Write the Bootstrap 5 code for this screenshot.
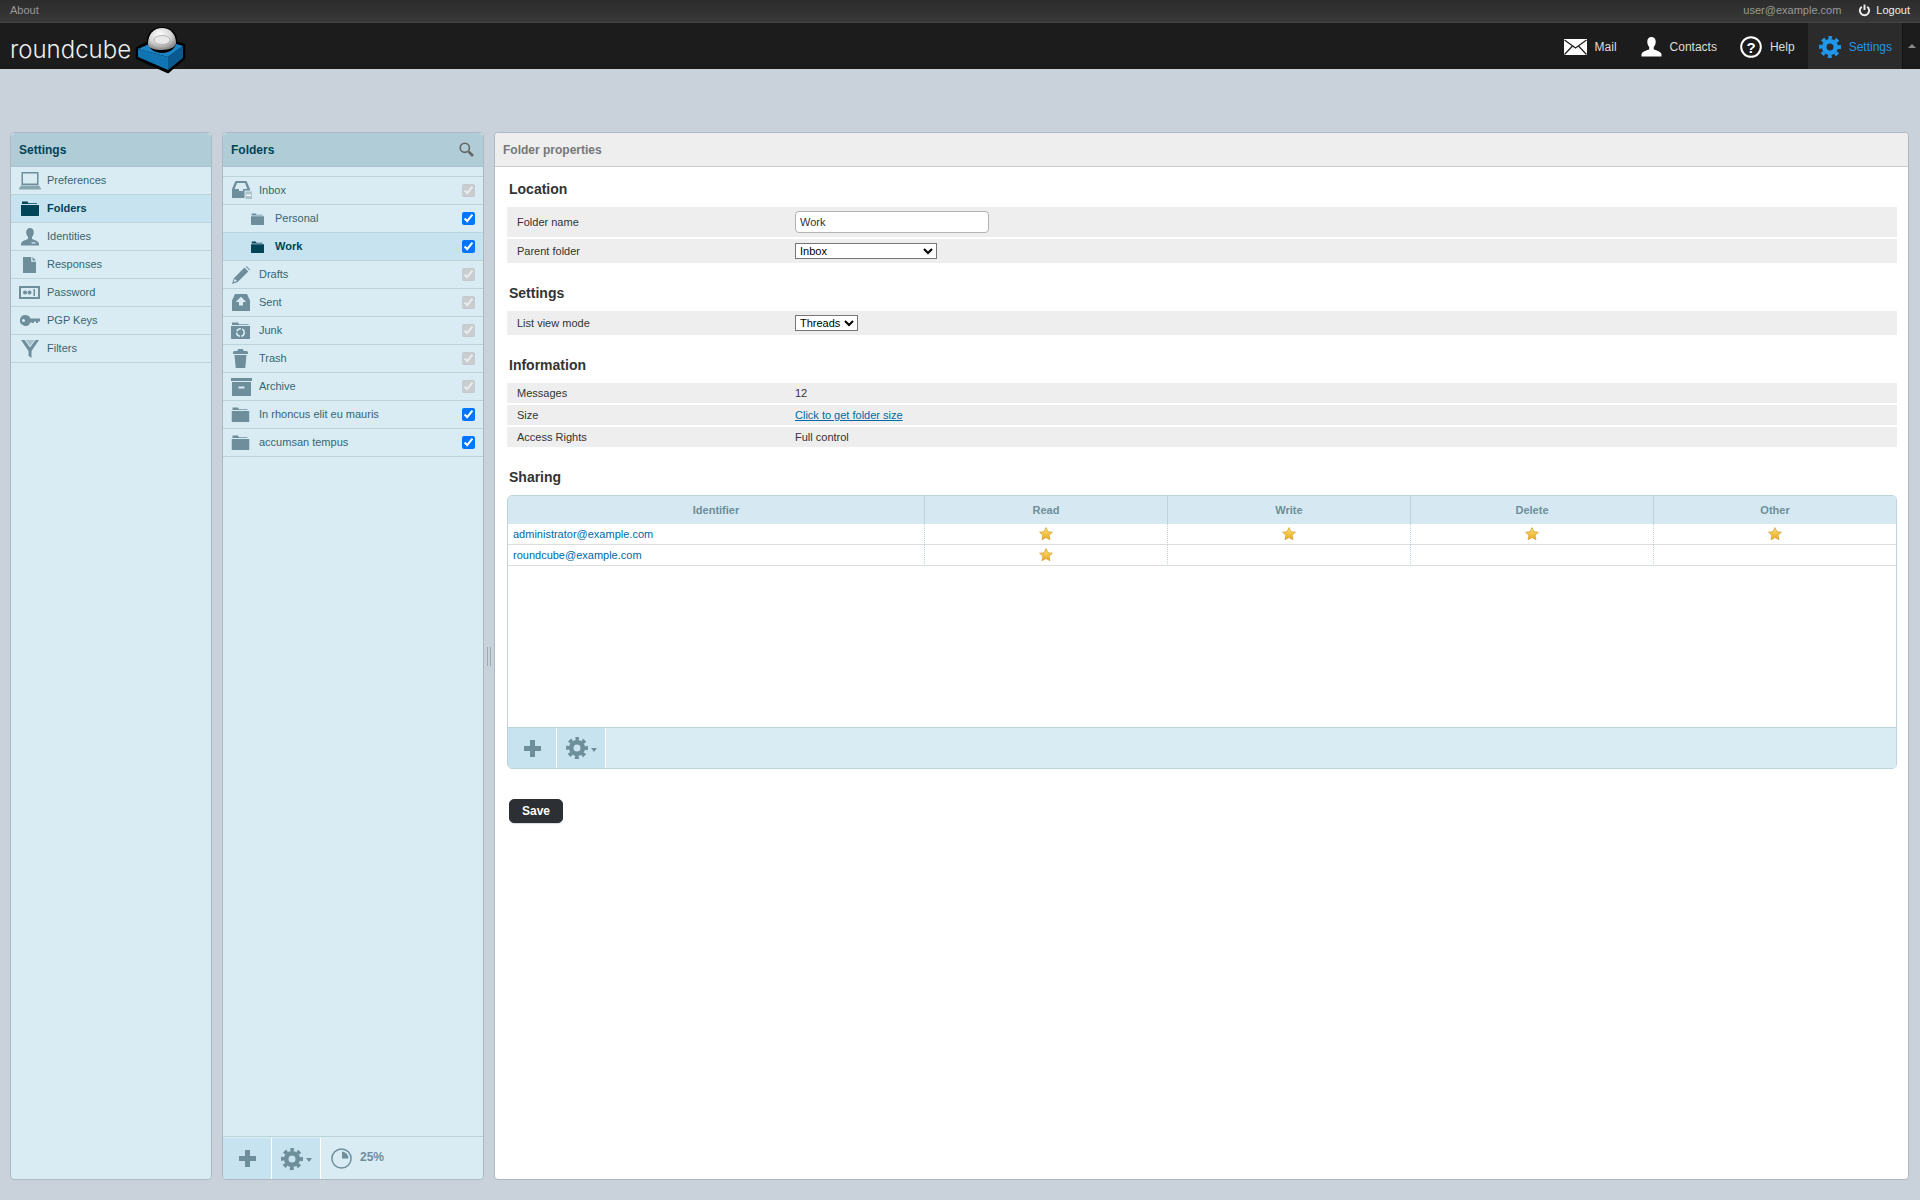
<!DOCTYPE html>
<html lang="en">
<head>
<meta charset="UTF-8">
<title>Roundcube Webmail :: Folders</title>
<link rel="stylesheet" href="https://cdn.jsdelivr.net/npm/bootstrap@5.3.0/dist/css/bootstrap.min.css">
<style>
html, body { height: 100%; }
body { background: #c9d1da; font-family: "Liberation Sans", Arial, sans-serif; font-size: 11px; color: #333; overflow: hidden; }

/* top lines */
.topline { height: 23px; background: linear-gradient(#2c2c2c, #383838); border-bottom: 1px solid #444; padding: 0 10px 2px; color: #999; }
.topline a { color: #999; text-decoration: none; }
.topline .logout-link { color: #eee; margin-left: 17px; gap: 5px; }
.header-bar { height: 46px; background: #1c1c1c; padding: 0; flex-wrap: nowrap; align-items: flex-start; }
.logo-text { font-family: Inter, "Liberation Sans", sans-serif; font-weight: 300; font-size: 24px; line-height: 46px; margin-top: 4px; height: 42px; color: #eee; margin-left: 10px; width: 125px; }
.logo-cube { width: 52px; height: 50px; margin-top: 2px; flex: none; }
.tab-link { height: 46px; padding: 1px 10px 0; color: #ddd; font-size: 12px; gap: 8px; margin-left: 3px; }
.tab-link:hover { color: #fff; }
.tab-contacts { margin-left: 4px; }
.tab-link.tab-on { background: #2b2b2b; color: #1f97ea; padding-left: 11px; }
.tab-toggle { width: 18px; height: 46px; border-left: 1px solid #111; }
.tri-up { width: 0; height: 0; border: 4px solid transparent; border-top: 0; border-bottom: 4px solid #888; }

/* panels */
.workspace { height: 1048px; margin: 63px 11px 0 10px; }
.side-panel { background: #d9ecf4; border: 1px solid #aeb8c3; border-radius: 4px; overflow: hidden; --bs-card-bg: #d9ecf4; }
.panel-settings { width: 202px; }
.panel-folders { width: 262px; margin-left: 10px; }
.panel-head { height: 34px; padding: 0 9px 0 8px; background: #b0ccd7; color: #004458; font-size: 12px; font-weight: 700; border: 0; border-bottom: 1px solid #a9c5d0; border-radius: 0; }
.splitter { width: 10px; }
.splitter span { display: block; width: 1px; height: 19px; background: #a0a8b0; margin: 0 1px; }
.list-group-flush > .sb-row, .list-group-flush > .sb-row:last-child { height: 28px; padding: 0; background: transparent; border: 0; border-bottom: 1px solid #bbd3da; border-radius: 0; color: #376572; font-size: 11px; }
.list-group-flush > .sb-row.sel { background: #c7e3ef; color: #004458; font-weight: 700; }
.sb-row.sel .ico-cell { color: #004458; }
.ico-cell { width: 36px; flex: none; color: #6d8e9a; padding-left: 1px; }
.fold-ico { width: 36px; flex: none; color: #6d8e9a; padding-left: 8px; }
.fold-sub .fold-ico { width: 52px; padding-left: 28px; }
.fold-sub.sel .fold-ico { color: #004458; }
.shift-1 { margin-left: 1px; }
.shift-2 { margin-left: 2px; }
.sb-row input { margin: 0 8px 0 auto; width: 13px; height: 13px; }
.gap-row { height: 10px; border-bottom: 1px solid #bbd3da; }
.folder-list { flex: 1 1 auto; }
.panel-foot { height: 43px; border-top: 1px solid #bbd3da; color: #6d8e9a; }
.foot-btn { width: 49px; padding: 0; margin-top: 1px; background: #c7e3ef; border: 0; border-right: 1px solid #fff; border-radius: 0; color: #6d8e9a; gap: 3px; }
.foot-btn:hover { background: #c7e3ef; color: #6d8e9a; }
.tri-down { width: 0; height: 0; border: 3.5px solid transparent; border-bottom: 0; border-top: 4px solid #6d8e9a; margin-top: 3px; }
.quota-box { gap: 8px; margin-left: 10px; font-size: 12px; font-weight: 700; }
.quota-box span { margin-top: -2px; }

/* right frame */
.prop-panel { flex: 1 1 0; background: #fff; border: 1px solid #aeb8c3; border-radius: 4px; overflow: hidden; }
.prop-head { height: 34px; padding: 0 8px; background: #eee; color: #777; font-size: 12px; font-weight: 700; border: 0; border-bottom: 1px solid #c9ced3; border-radius: 0; }
.prop-body { padding: 14px 11px 0 12px; }
.sec-title { font-size: 14px; font-weight: 700; line-height: 17px; color: #333; margin: 0 0 9px 2px; }
.sec-block { margin-bottom: 22px; gap: 2px; }
.prop-row { background: #eee; padding-left: 10px; color: #333; }
.h-30 { height: 30px; }
.h-24 { height: 24px; }
.h-20 { height: 20px; }
.prop-label { width: 278px; flex: none; }
.prop-row a { color: #0069a6; }
.prop-row input[type=text] { width: 194px; height: 22px; border: 1px solid #b2b2b2; border-radius: 4px; padding: 0 4px; font-size: 11px; color: #333; background: #fff; line-height: normal; }
.prop-row select { font-size: 11px; line-height: normal; height: 16px; padding: 0; color: #000; background-color: #fff; }
.sel-wide { width: 142px; }
.sel-short { width: 63px; }

/* sharing table */
.share-box { height: 274px; border: 1px solid #bbd3da; border-radius: 5px; overflow: hidden; margin-bottom: 30px; }
.share-scroll { flex: 1 1 auto; }
.share-table { table-layout: fixed; margin: 0; font-size: 11px; border-collapse: separate; border-spacing: 0; }
.share-table th { height: 28px; padding: 0; background: #d6e9f2; color: #6d8e9a; font-weight: 700; text-align: center; vertical-align: middle; border: 0; border-left: 1px solid #bbd3da; }
.share-table th:first-child { border-left: 0; width: 416px; }
.share-table td { height: 21px; padding: 0 4px; vertical-align: middle; text-align: center; border: 0; border-bottom: 1px solid #ddd; border-left: 1px dotted #bbd3da; box-shadow: none; line-height: 1; }
.share-table td:first-child { border-left: 0; padding-left: 5px; text-align: left; color: #0069a6; }
.share-table td svg { display: block; margin: 0 auto; }
.share-foot { height: 41px; flex: none; background: #d9ecf4; border-top: 1px solid #bbd3da; }
.share-foot .foot-btn { margin-top: 0; }
.btn-save { width: 54px; height: 24px; padding: 0; margin-left: 2px; background: #2c3035; border: 1px solid #2c3035; border-radius: 5px; color: #fff; font-size: 12px; font-weight: 700; box-shadow: 0 1px 1px rgba(0,0,0,.15); }
.btn-save:hover { background: #2c3035; color: #fff; }
</style>
</head>
<body>

<!-- icon sprite -->
<svg class="position-absolute" width="0" height="0">
  <defs>
    <linearGradient id="starfill" x1="0" y1="0" x2="0" y2="1"><stop offset="0" stop-color="#fbe27a"/><stop offset="1" stop-color="#eba81c"/></linearGradient>
  </defs>
  <symbol id="i-laptop" viewBox="0 0 22 18"><path fill-rule="evenodd" d="M2.500 0h17v13h-17zM4 1.500v10h14v-10z"/><path opacity=".75" d="M2 13.500h18l2 3v1H0v-1z"/></symbol>
  <symbol id="i-folder" viewBox="0 0 18 15"><path d="M1 2.200V.6h5.500l1 1.600H16v.8H1zM0 4h18v10.500l-.5.5H.5L0 14.500z"/></symbol>
  <symbol id="i-person" viewBox="0 0 18 18"><path fill-rule="evenodd" d="M9 0c2.300 0 3.800 1.700 3.800 4.200 0 2-.8 3.600-1.800 4.800v2c1.800 1 6 1.500 7 4.500v2H0v-2c1-3 5.200-3.500 7-4.500V9C6 7.800 5.200 6.200 5.200 4.200 5.200 1.700 6.700 0 9 0zM10.500 14.200v1.300h4v-1.300z"/></symbol>
  <symbol id="i-doc" viewBox="0 0 13 16"><path d="M0 0h8.200v4.800H13V16H0zM9.500 0L13 3.500H9.500z"/></symbol>
  <symbol id="i-pass" viewBox="0 0 21 13"><path fill-rule="evenodd" d="M0 0h21v13H0zM2 2v9h17V2z"/><circle cx="6" cy="6.500" r="2"/><circle cx="10.500" cy="6.500" r="2"/><path d="M14.500 3H16v7h-1.500z"/></symbol>
  <symbol id="i-key" viewBox="0 0 20 11"><path fill-rule="evenodd" d="M5.500 0a5.500 5.500 0 0 1 5 3.500H20v3h-2v1.500h-2V6.500h-2V8h-2V7.500h-1.500A5.500 5.500 0 1 1 5.500 0zM3.500 4a1.500 1.500 0 1 0 0 3 1.500 1.500 0 0 0 0-3z"/></symbol>
  <symbol id="i-filter" viewBox="0 0 18 18"><path d="M0 0h3.500L9 7.500 14.500 0H18l-7.500 11v7l-3-2.200V11z"/><path opacity=".45" d="M4.500 0h9L9 6z"/></symbol>
  <symbol id="i-inbox" viewBox="0 0 21 19"><path fill-rule="evenodd" d="M3.500 0h11L18 8v9H0V8zM5 2L2.700 8H7v2h4V8h4.300L13 2z"/><rect x="13" y="10" width="7.500" height="8.500" fill="#a9c2cc" stroke="#d9ecf4"/><path d="M14.500 13.500h4.500v1.500h-4.500z" fill="#fff"/></symbol>
  <symbol id="i-pencil" viewBox="0 0 18 18"><path d="M0 18l1.800-5.800L12.500 1.600 16.300 5.400 5.700 16zM2.600 12.700l-.9 3.400 3.400-1z"/><path d="M13.700.7l.7-.7 3.600 3.600-.7.7z"/></symbol>
  <symbol id="i-sent" viewBox="0 0 18 17"><path fill-rule="evenodd" d="M3 0h12l3 6.500V17H0V6.500zM9 2.800L3.800 8H7v3.500h4V8h3.200z"/></symbol>
  <symbol id="i-junk" viewBox="0 0 19 17"><path d="M1 2.200V.5h6l1 1.700h9.500V3H1zM0 4h19v12.500l-.5.500H.5L0 16.500z"/><g fill="none" stroke="#d9ecf4" stroke-width="1.600"><circle cx="9.500" cy="10.500" r="3.800" stroke-dasharray="5 1.400"/></g></symbol>
  <symbol id="i-trash" viewBox="0 0 15 19"><path d="M4.500 1.200Q4.500 0 6 0h3q1.500 0 1.500 1.200V2h3.200Q15 2 15 3.500V5H0V3.500Q0 2 1.300 2h3.200zM1.500 6h12L12.300 19H2.700z"/></symbol>
  <symbol id="i-archive" viewBox="0 0 21 18"><path fill-rule="evenodd" d="M0 0h21v3H0zM1 4h19v14H1zM7.500 8.500v2h6v-2z"/></symbol>
  <symbol id="i-gear" viewBox="-11 -11 22 22"><circle r="5.800" fill="none" stroke="currentColor" stroke-width="4.600"/><circle r="9.300" fill="none" stroke="currentColor" stroke-width="3.400" stroke-dasharray="3.900 3.404" stroke-dashoffset="1.950" transform="rotate(-90)"/></symbol>
  <symbol id="i-star" viewBox="0 0 14 14"><path d="M7 .6l1.900 4.100 4.500.5-3.300 3 .9 4.500L7 10.500l-4 2.200.9-4.500-3.300-3 4.500-.5z" fill="url(#starfill)" stroke="#d39b2b" stroke-width=".7" stroke-linejoin="round"/></symbol>
</svg>

<div class="topline d-flex align-items-center">
  <a href="#">About</a>
  <span class="ms-auto">user@example.com</span>
  <a href="#" class="logout-link d-flex align-items-center">
    <svg width="13" height="13" viewBox="0 0 12 12" fill="none" stroke="#eee" stroke-width="1.800"><path d="M3.500 2.500a4.300 4.300 0 1 0 5 0"/><path d="M6 .5v5"/></svg>
    Logout
  </a>
</div>

<nav class="navbar header-bar">
  <div class="d-flex align-items-start">
    <span class="logo-text">roundcube</span>
    <svg class="logo-cube" viewBox="0 0 52 50">
      <defs>
        <radialGradient id="dome" cx=".42" cy=".3" r=".75"><stop offset="0" stop-color="#fff"/><stop offset=".55" stop-color="#d4d4d4"/><stop offset="1" stop-color="#7b7b7b"/></radialGradient>
      </defs>
      <path d="M2 23L24 12l25 8v13L33 47 2 33z" fill="#000" stroke="#000" stroke-width="2.500" stroke-linejoin="round"/>
      <path d="M3 24L25 14l23 7-15 11z" fill="#1a84c6"/>
      <path d="M3 24l30 8v13L3 32z" fill="#1275b3"/>
      <path d="M33 32l15-11v12L33 45z" fill="#0a5a90"/>
      <ellipse cx="27" cy="15" rx="15" ry="13" fill="#000"/>
      <path d="M13 19C13 9 19 3 27 3s14 6 14 15c0 4-6 7-14 7s-14-2-14-6z" fill="url(#dome)"/>
      <ellipse cx="27" cy="15" rx="8" ry="4.500" fill="#e9e9e9" stroke="#aaa" stroke-width=".8"/>
    </svg>
  </div>
  <div class="d-flex align-items-center ms-auto">
    <a href="#" class="nav-link tab-link d-flex align-items-center">
      <svg width="23" height="16" viewBox="0 0 23 16"><path d="M0 0h23v16H0z" fill="#fff"/><path d="M.5 1l11 8 11-8M.5 15.500l8-8.500M22.500 15.500l-8-8.500" fill="none" stroke="#1c1c1c" stroke-width="1.200"/></svg>
      Mail
    </a>
    <a href="#" class="nav-link tab-link tab-contacts d-flex align-items-center">
      <svg width="21" height="20" viewBox="0 0 18 18" fill="#fff"><path d="M9 0c2.300 0 3.800 1.700 3.800 4.200 0 2-.8 3.600-1.800 4.800v2c1.800 1 6 1.500 7 4.500v2H0v-2c1-3 5.200-3.500 7-4.500V9C6 7.800 5.200 6.200 5.200 4.200 5.200 1.700 6.700 0 9 0z"/></svg>
      Contacts
    </a>
    <a href="#" class="nav-link tab-link d-flex align-items-center">
      <svg width="22" height="22" viewBox="0 0 22 22"><circle cx="11" cy="11" r="9.800" fill="none" stroke="#fff" stroke-width="2"/><text x="11" y="16.500" text-anchor="middle" font-family="Liberation Sans, sans-serif" font-weight="700" font-size="15" fill="#fff">?</text></svg>
      Help
    </a>
    <a href="#" class="nav-link tab-link tab-on d-flex align-items-center">
      <svg width="22" height="22"><use href="#i-gear"/></svg>
      Settings
    </a>
    <div class="tab-toggle d-flex align-items-center justify-content-center"><span class="tri-up"></span></div>
  </div>
</nav>

<div class="workspace d-flex">
  <div class="card side-panel panel-settings flex-shrink-0">
    <div class="card-header panel-head d-flex align-items-center">Settings</div>
    <div class="list-group list-group-flush">
      <a href="#" class="list-group-item sb-row d-flex align-items-center"><span class="ico-cell d-flex justify-content-center"><svg width="22" height="18" fill="currentColor"><use href="#i-laptop"/></svg></span>Preferences</a>
      <a href="#" class="list-group-item sb-row sel d-flex align-items-center"><span class="ico-cell d-flex justify-content-center"><svg width="18" height="15" fill="currentColor"><use href="#i-folder"/></svg></span>Folders</a>
      <a href="#" class="list-group-item sb-row d-flex align-items-center"><span class="ico-cell d-flex justify-content-center"><svg width="18" height="18" fill="currentColor"><use href="#i-person"/></svg></span>Identities</a>
      <a href="#" class="list-group-item sb-row d-flex align-items-center"><span class="ico-cell d-flex justify-content-center"><svg width="13" height="16" fill="currentColor"><use href="#i-doc"/></svg></span>Responses</a>
      <a href="#" class="list-group-item sb-row d-flex align-items-center"><span class="ico-cell d-flex justify-content-center"><svg width="21" height="13" fill="currentColor"><use href="#i-pass"/></svg></span>Password</a>
      <a href="#" class="list-group-item sb-row d-flex align-items-center"><span class="ico-cell d-flex justify-content-center"><svg width="20" height="11" fill="currentColor"><use href="#i-key"/></svg></span>PGP Keys</a>
      <a href="#" class="list-group-item sb-row d-flex align-items-center"><span class="ico-cell d-flex justify-content-center"><svg width="18" height="18" fill="currentColor"><use href="#i-filter"/></svg></span>Filters</a>
    </div>
  </div>

  <div class="card side-panel panel-folders flex-shrink-0">
    <div class="card-header panel-head d-flex align-items-center justify-content-between">
      Folders
      <svg width="15" height="15" viewBox="0 0 15 15" fill="none" stroke="#666"><circle cx="5.800" cy="5.800" r="4.600" stroke-width="1.600"/><path d="M9.500 9.500l4.500 4.500" stroke-width="2.600"/></svg>
    </div>
    <div class="folder-list">
      <div class="gap-row"></div>
      <div class="list-group list-group-flush">
        <div class="list-group-item sb-row d-flex align-items-center"><span class="fold-ico d-flex"><svg width="21" height="19" class="shift-1" fill="currentColor"><use href="#i-inbox"/></svg></span>Inbox<input type="checkbox" checked disabled></div>
        <div class="list-group-item sb-row fold-sub d-flex align-items-center"><span class="fold-ico d-flex"><svg width="13" height="12" viewBox="0 0 18 15" preserveAspectRatio="none" fill="currentColor"><use href="#i-folder"/></svg></span>Personal<input type="checkbox" checked></div>
        <div class="list-group-item sb-row sel fold-sub d-flex align-items-center"><span class="fold-ico d-flex"><svg width="13" height="12" viewBox="0 0 18 15" preserveAspectRatio="none" fill="currentColor"><use href="#i-folder"/></svg></span>Work<input type="checkbox" checked></div>
        <div class="list-group-item sb-row d-flex align-items-center"><span class="fold-ico d-flex"><svg width="18" height="18" class="shift-1" fill="currentColor"><use href="#i-pencil"/></svg></span>Drafts<input type="checkbox" checked disabled></div>
        <div class="list-group-item sb-row d-flex align-items-center"><span class="fold-ico d-flex"><svg width="18" height="17" class="shift-1" fill="currentColor"><use href="#i-sent"/></svg></span>Sent<input type="checkbox" checked disabled></div>
        <div class="list-group-item sb-row d-flex align-items-center"><span class="fold-ico d-flex"><svg width="19" height="17" fill="currentColor"><use href="#i-junk"/></svg></span>Junk<input type="checkbox" checked disabled></div>
        <div class="list-group-item sb-row d-flex align-items-center"><span class="fold-ico d-flex"><svg width="15" height="19" class="shift-2" fill="currentColor"><use href="#i-trash"/></svg></span>Trash<input type="checkbox" checked disabled></div>
        <div class="list-group-item sb-row d-flex align-items-center"><span class="fold-ico d-flex"><svg width="21" height="18" fill="currentColor"><use href="#i-archive"/></svg></span>Archive<input type="checkbox" checked disabled></div>
        <div class="list-group-item sb-row d-flex align-items-center"><span class="fold-ico d-flex"><svg width="19" height="15" viewBox="0 0 18 15" fill="currentColor"><use href="#i-folder"/></svg></span>In rhoncus elit eu mauris<input type="checkbox" checked></div>
        <div class="list-group-item sb-row d-flex align-items-center"><span class="fold-ico d-flex"><svg width="19" height="15" viewBox="0 0 18 15" fill="currentColor"><use href="#i-folder"/></svg></span>accumsan tempus<input type="checkbox" checked></div>
      </div>
    </div>
    <div class="panel-foot d-flex align-items-stretch">
      <button type="button" class="btn foot-btn d-flex align-items-center justify-content-center">
        <svg width="17" height="17" viewBox="0 0 17 17" fill="currentColor"><path d="M6 0h5v6h6v5h-6v6H6v-6H0V6h6z"/></svg>
      </button>
      <button type="button" class="btn foot-btn d-flex align-items-center justify-content-center">
        <svg width="22" height="22"><use href="#i-gear"/></svg><span class="tri-down"></span>
      </button>
      <div class="quota-box d-flex align-items-center">
        <svg width="21" height="21" viewBox="0 0 21 21"><circle cx="10.500" cy="10.500" r="9.600" fill="none" stroke="#6d8e9a" stroke-width="1.500"/><path d="M11 3.500a7 7 0 0 1 6.500 7H11z" fill="#6d8e9a"/></svg>
        <span>25%</span>
      </div>
    </div>
  </div>

  <div class="splitter flex-shrink-0 d-flex align-items-center justify-content-center"><span></span><span></span></div>

  <div class="card prop-panel">
    <div class="card-header prop-head d-flex align-items-center">Folder properties</div>
    <div class="prop-body">
      <h3 class="sec-title">Location</h3>
      <div class="sec-block d-flex flex-column">
        <div class="prop-row h-30 d-flex align-items-center"><span class="prop-label">Folder name</span><input type="text" value="Work"></div>
        <div class="prop-row h-24 d-flex align-items-center"><span class="prop-label">Parent folder</span><select class="sel-wide"><option>Inbox</option></select></div>
      </div>

      <h3 class="sec-title">Settings</h3>
      <div class="sec-block d-flex flex-column">
        <div class="prop-row h-24 d-flex align-items-center"><span class="prop-label">List view mode</span><select class="sel-short"><option>Threads</option></select></div>
      </div>

      <h3 class="sec-title">Information</h3>
      <div class="sec-block d-flex flex-column">
        <div class="prop-row h-20 d-flex align-items-center"><span class="prop-label">Messages</span><span>12</span></div>
        <div class="prop-row h-20 d-flex align-items-center"><span class="prop-label">Size</span><a href="#">Click to get folder size</a></div>
        <div class="prop-row h-20 d-flex align-items-center"><span class="prop-label">Access Rights</span><span>Full control</span></div>
      </div>

      <h3 class="sec-title">Sharing</h3>
      <div class="share-box d-flex flex-column">
        <div class="share-scroll">
          <table class="table share-table">
            <thead>
              <tr><th>Identifier</th><th>Read</th><th>Write</th><th>Delete</th><th>Other</th></tr>
            </thead>
            <tbody>
              <tr>
                <td>administrator@example.com</td>
                <td><svg width="14" height="14"><use href="#i-star"/></svg></td>
                <td><svg width="14" height="14"><use href="#i-star"/></svg></td>
                <td><svg width="14" height="14"><use href="#i-star"/></svg></td>
                <td><svg width="14" height="14"><use href="#i-star"/></svg></td>
              </tr>
              <tr>
                <td>roundcube@example.com</td>
                <td><svg width="14" height="14"><use href="#i-star"/></svg></td>
                <td></td><td></td><td></td>
              </tr>
            </tbody>
          </table>
        </div>
        <div class="share-foot d-flex align-items-stretch">
          <button type="button" class="btn foot-btn d-flex align-items-center justify-content-center">
            <svg width="17" height="17" viewBox="0 0 17 17" fill="currentColor"><path d="M6 0h5v6h6v5h-6v6H6v-6H0V6h6z"/></svg>
          </button>
          <button type="button" class="btn foot-btn d-flex align-items-center justify-content-center">
            <svg width="22" height="22"><use href="#i-gear"/></svg><span class="tri-down"></span>
          </button>
        </div>
      </div>

      <button type="button" class="btn btn-save">Save</button>
    </div>
  </div>
</div>

<script src="https://cdn.jsdelivr.net/npm/bootstrap@5.3.0/dist/js/bootstrap.bundle.min.js"></script>
</body>
</html>
